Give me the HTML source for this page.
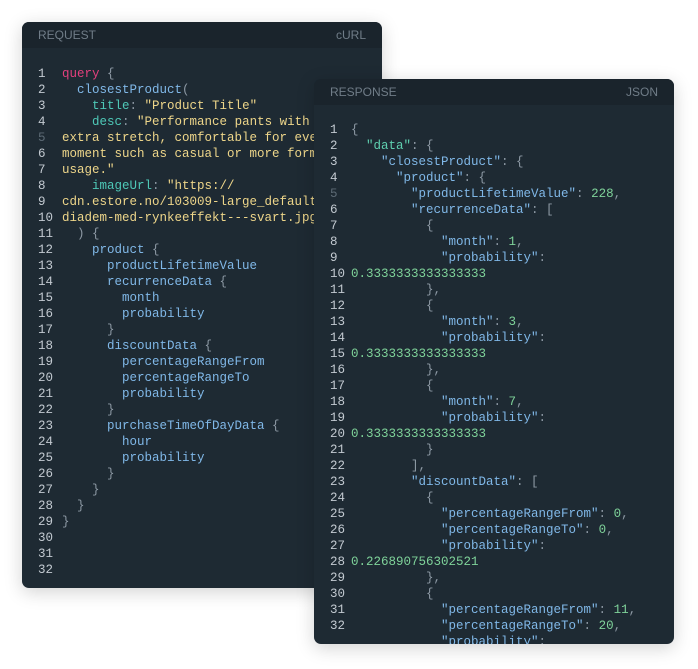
<!DOCTYPE html>
<html><head><meta charset="utf-8"><style>
body{margin:0;width:698px;height:669px;background:#fff;position:relative;overflow:hidden;font-family:"Liberation Mono",monospace}
.p{position:absolute;background:#1e2a33;border-radius:7px;overflow:hidden;box-shadow:0 4px 18px rgba(0,0,0,.18)}
.h{height:26px;background:#1a242c;display:flex;justify-content:space-between;align-items:center;padding:0 16px;font-family:"Liberation Sans",sans-serif;font-size:12px;color:#707d88}
.c{position:absolute;left:0;right:0;font-size:12.5px;line-height:16px;color:#8d99a4}
.r{display:flex;white-space:pre;height:16px}
.n{color:#c3cad1;flex:none}
.d{color:#5c6a75}
.k{color:#e2407d}.b{color:#80b8e8}.t{color:#4ec9b8}.s{color:#eed68a}.g{color:#7fd39a}.q{color:#5fd0b0}
</style></head><body>
<div class="p" style="left:22px;top:22px;width:360px;height:566px">
<div class="h"><span>REQUEST</span><span>cURL</span></div>
<div class="c" style="top:44px;left:16px">
<div class="r"><span class="n" style="width:24px">1</span><span><span class="k">query</span> {</span></div>
<div class="r"><span class="n" style="width:24px">2</span><span>  <span class="b">closestProduct</span>(</span></div>
<div class="r"><span class="n" style="width:24px">3</span><span>    <span class="t">title</span>: <span class="s">"Product Title"</span></span></div>
<div class="r"><span class="n" style="width:24px">4</span><span>    <span class="t">desc</span>: <span class="s">"Performance pants with</span></span></div>
<div class="r"><span class="n d" style="width:24px">5</span><span class="s">extra stretch, comfortable for every</span></div>
<div class="r"><span class="n" style="width:24px">6</span><span class="s">moment such as casual or more formal</span></div>
<div class="r"><span class="n" style="width:24px">7</span><span class="s">usage."</span></div>
<div class="r"><span class="n" style="width:24px">8</span><span>    <span class="t">imageUrl</span>: <span class="s">"https://</span></span></div>
<div class="r"><span class="n" style="width:24px">9</span><span class="s">cdn.estore.no/103009-large_default/</span></div>
<div class="r"><span class="n" style="width:24px">10</span><span class="s">diadem-med-rynkeeffekt---svart.jpg"</span></div>
<div class="r"><span class="n" style="width:24px">11</span><span>  ) {</span></div>
<div class="r"><span class="n" style="width:24px">12</span><span>    <span class="b">product</span> {</span></div>
<div class="r"><span class="n" style="width:24px">13</span><span class="b">      productLifetimeValue</span></div>
<div class="r"><span class="n" style="width:24px">14</span><span>      <span class="b">recurrenceData</span> {</span></div>
<div class="r"><span class="n" style="width:24px">15</span><span class="b">        month</span></div>
<div class="r"><span class="n" style="width:24px">16</span><span class="b">        probability</span></div>
<div class="r"><span class="n" style="width:24px">17</span><span>      }</span></div>
<div class="r"><span class="n" style="width:24px">18</span><span>      <span class="b">discountData</span> {</span></div>
<div class="r"><span class="n" style="width:24px">19</span><span class="b">        percentageRangeFrom</span></div>
<div class="r"><span class="n" style="width:24px">20</span><span class="b">        percentageRangeTo</span></div>
<div class="r"><span class="n" style="width:24px">21</span><span class="b">        probability</span></div>
<div class="r"><span class="n" style="width:24px">22</span><span>      }</span></div>
<div class="r"><span class="n" style="width:24px">23</span><span>      <span class="b">purchaseTimeOfDayData</span> {</span></div>
<div class="r"><span class="n" style="width:24px">24</span><span class="b">        hour</span></div>
<div class="r"><span class="n" style="width:24px">25</span><span class="b">        probability</span></div>
<div class="r"><span class="n" style="width:24px">26</span><span>      }</span></div>
<div class="r"><span class="n" style="width:24px">27</span><span>    }</span></div>
<div class="r"><span class="n" style="width:24px">28</span><span>  }</span></div>
<div class="r"><span class="n" style="width:24px">29</span><span>}</span></div>
<div class="r"><span class="n" style="width:24px">30</span></div>
<div class="r"><span class="n" style="width:24px">31</span></div>
<div class="r"><span class="n" style="width:24px">32</span></div>
</div></div>
<div class="p" style="left:314px;top:79px;width:360px;height:565px">
<div class="h"><span>RESPONSE</span><span>JSON</span></div>
<div class="c" style="top:43px;left:16px">
<div class="r"><span class="n" style="width:21px">1</span><span>{</span></div>
<div class="r"><span class="n" style="width:21px">2</span><span>  <span class="q">"data"</span>: {</span></div>
<div class="r"><span class="n" style="width:21px">3</span><span>    <span class="b">"closestProduct"</span>: {</span></div>
<div class="r"><span class="n" style="width:21px">4</span><span>      <span class="b">"product"</span>: {</span></div>
<div class="r"><span class="n d" style="width:21px">5</span><span>        <span class="b">"productLifetimeValue"</span>: <span class="g">228</span>,</span></div>
<div class="r"><span class="n" style="width:21px">6</span><span>        <span class="b">"recurrenceData"</span>: [</span></div>
<div class="r"><span class="n" style="width:21px">7</span><span>          {</span></div>
<div class="r"><span class="n" style="width:21px">8</span><span>            <span class="b">"month"</span>: <span class="g">1</span>,</span></div>
<div class="r"><span class="n" style="width:21px">9</span><span>            <span class="b">"probability"</span>:</span></div>
<div class="r"><span class="n" style="width:21px">10</span><span class="g">0.3333333333333333</span></div>
<div class="r"><span class="n" style="width:21px">11</span><span>          },</span></div>
<div class="r"><span class="n" style="width:21px">12</span><span>          {</span></div>
<div class="r"><span class="n" style="width:21px">13</span><span>            <span class="b">"month"</span>: <span class="g">3</span>,</span></div>
<div class="r"><span class="n" style="width:21px">14</span><span>            <span class="b">"probability"</span>:</span></div>
<div class="r"><span class="n" style="width:21px">15</span><span class="g">0.3333333333333333</span></div>
<div class="r"><span class="n" style="width:21px">16</span><span>          },</span></div>
<div class="r"><span class="n" style="width:21px">17</span><span>          {</span></div>
<div class="r"><span class="n" style="width:21px">18</span><span>            <span class="b">"month"</span>: <span class="g">7</span>,</span></div>
<div class="r"><span class="n" style="width:21px">19</span><span>            <span class="b">"probability"</span>:</span></div>
<div class="r"><span class="n" style="width:21px">20</span><span class="g">0.3333333333333333</span></div>
<div class="r"><span class="n" style="width:21px">21</span><span>          }</span></div>
<div class="r"><span class="n" style="width:21px">22</span><span>        ],</span></div>
<div class="r"><span class="n" style="width:21px">23</span><span>        <span class="b">"discountData"</span>: [</span></div>
<div class="r"><span class="n" style="width:21px">24</span><span>          {</span></div>
<div class="r"><span class="n" style="width:21px">25</span><span>            <span class="b">"percentageRangeFrom"</span>: <span class="g">0</span>,</span></div>
<div class="r"><span class="n" style="width:21px">26</span><span>            <span class="b">"percentageRangeTo"</span>: <span class="g">0</span>,</span></div>
<div class="r"><span class="n" style="width:21px">27</span><span>            <span class="b">"probability"</span>:</span></div>
<div class="r"><span class="n" style="width:21px">28</span><span class="g">0.226890756302521</span></div>
<div class="r"><span class="n" style="width:21px">29</span><span>          },</span></div>
<div class="r"><span class="n" style="width:21px">30</span><span>          {</span></div>
<div class="r"><span class="n" style="width:21px">31</span><span>            <span class="b">"percentageRangeFrom"</span>: <span class="g">11</span>,</span></div>
<div class="r"><span class="n" style="width:21px">32</span><span>            <span class="b">"percentageRangeTo"</span>: <span class="g">20</span>,</span></div>
<div class="r"><span class="n" style="width:21px"></span><span>            <span class="b">"probability"</span>:</span></div>
</div></div>
</body></html>
